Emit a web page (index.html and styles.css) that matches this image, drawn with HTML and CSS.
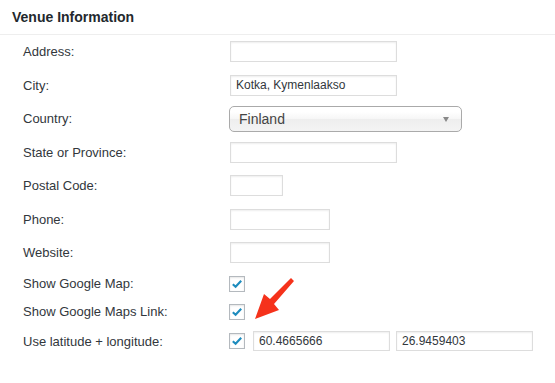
FILE: index.html
```html
<!DOCTYPE html>
<html>
<head>
	<meta charset="utf-8">
	<title>Venue Information</title>
	<link rel="stylesheet" href="styles.css">
</head>
<body>
	<div class="box">
		<h2 class="box-title">Venue Information</h2>

		<div class="form">
			<div class="row">
				<label>Address:</label>
				<input type="text" class="ipt ipt-l" value="">
			</div>
			<div class="row">
				<label>City:</label>
				<input type="text" class="ipt ipt-l" value="Kotka, Kymenlaakso">
			</div>
			<div class="row">
				<label>Country:</label>
				<div class="select">
					<span>Finland</span>
					<b class="select-arrow"></b>
				</div>
			</div>
			<div class="row">
				<label>State or Province:</label>
				<input type="text" class="ipt ipt-l" value="">
			</div>
			<div class="row">
				<label>Postal Code:</label>
				<input type="text" class="ipt ipt-s" value="">
			</div>
			<div class="row">
				<label>Phone:</label>
				<input type="text" class="ipt ipt-m" value="">
			</div>
			<div class="row">
				<label>Website:</label>
				<input type="text" class="ipt ipt-m" value="">
			</div>

			<div class="row row-check">
				<label>Show Google Map:</label>
				<span class="check"><svg viewBox="0 0 16 16"><path d="M3.2 8.2 L6.4 11.2 L12.8 4.2" /></svg></span>
			</div>
			<div class="row row-check">
				<label>Show Google Maps Link:</label>
				<span class="check"><svg viewBox="0 0 16 16"><path d="M3.2 8.2 L6.4 11.2 L12.8 4.2" /></svg></span>
				<svg class="arrow" viewBox="0 0 50 50" width="50" height="50">
					<polygon points="41,3 44,6 24,29 29,35 5,44 14,19 20,24" />
				</svg>
			</div>
			<div class="row row-latlng">
				<label>Use latitude + longitude:</label>
				<span class="check"><svg viewBox="0 0 16 16"><path d="M3.2 8.2 L6.4 11.2 L12.8 4.2" /></svg></span>
				<input type="text" class="ipt ipt-coord" value="60.4665666">
				<input type="text" class="ipt ipt-coord" value="26.9459403">
			</div>
		</div>
	</div>
</body>
</html>
```

FILE: styles.css
```css
* {
	margin: 0;
	padding: 0;
	box-sizing: border-box;
}
body {
	background: #fff;
	font-family: "Liberation Sans", Arial, sans-serif;
	color: #23282d;
}
.box {
	width: 555px;
}
.box-title {
	height: 35px;
	padding: 9px 0 0 12px;
	border-bottom: 1px solid #eee;
	font-size: 14px;
	font-weight: bold;
	color: #23282d;
}

.form {
	padding-left: 23px;
}
.row {
	position: relative;
	display: flex;
	align-items: center;
	height: 33.5px;
}
.row label {
	width: 206px;
	flex-shrink: 0;
	font-size: 13px;
	color: #32373c;
}
.row-check {
	height: 28px;
}
.row-latlng {
	height: 31px;
}

.ipt {
	height: 21px;
	padding: 0 5px;
	border: 1px solid #ddd;
	box-shadow: inset 0 1px 2px rgba(0, 0, 0, .07);
	background: #fff;
	outline: 0;
	font-family: "Liberation Sans", Arial, sans-serif;
	font-size: 12px;
	color: #32373c;
}
.ipt-l {
	margin-left: 1px;
	width: 167px;
}
.ipt-m {
	margin-left: 1px;
	width: 100px;
}
.ipt-s {
	margin-left: 1px;
	width: 53px;
}
.ipt-coord {
	width: 137px;
	height: 20px;
	margin-left: 8px;
}
.ipt-coord + .ipt-coord {
	margin-left: 6px;
}

.select {
	position: relative;
	width: 233px;
	height: 26px;
	padding-left: 9px;
	border: 1px solid #aaa;
	border-radius: 5px;
	background: linear-gradient(#fff 20%, #f6f6f6 50%, #eee 52%, #f4f4f4);
	font-size: 14px;
	line-height: 24px;
	color: #444;
}
.select-arrow {
	position: absolute;
	top: 10px;
	right: 12px;
	border-top: 5px solid #888;
	border-left: 3px solid transparent;
	border-right: 3px solid transparent;
}

.check {
	display: inline-block;
	width: 16px;
	height: 16px;
	border: 1px solid #b4b9be;
	background: #fff;
	box-shadow: inset 0 1px 2px rgba(0, 0, 0, .1);
}
.check svg {
	display: block;
	width: 14px;
	height: 14px;
}
.check path {
	fill: none;
	stroke: #1e8cbe;
	stroke-width: 2.4;
}

.arrow {
	position: absolute;
	left: 227px;
	top: -22.5px;
}
.arrow polygon {
	fill: #f5321b;
}
```
